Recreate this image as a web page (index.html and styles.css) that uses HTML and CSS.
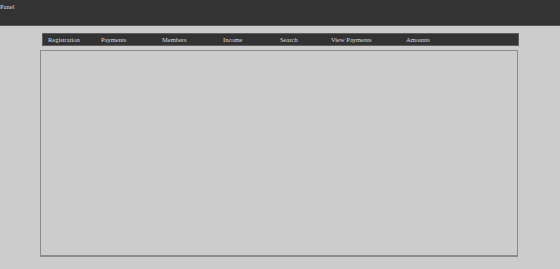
FILE: index.html
```html
<!DOCTYPE html>
<html>
<head>
<meta charset="utf-8">
<link rel="stylesheet" href="styles.css">
</head>
<body>
<header class="top">Panel</header>
<main class="wrap">
  <nav class="menu">
    <a class="item w1">Registration</a>
    <a class="item w2">Payments</a>
    <a class="item w2">Members</a>
    <a class="item w3">Income</a>
    <a class="item w4">Search</a>
    <a class="item w5">View Payments</a>
    <a class="item">Amounts</a>
  </nav>
  <section class="content"></section>
</main>
</body>
</html>
```
FILE: styles.css
```css
html, body {
  margin: 0;
  padding: 0;
  background: #cccccc;
  font-family: "Liberation Serif", "Times New Roman", serif;
}
.top {
  box-sizing: border-box;
  height: 26px;
  background: #333333;
  border-bottom: 1px solid #5a5a5a;
  color: #dddddd;
  font-size: 6.5px;
  line-height: 7px;
  padding: 3px 0 0 0;
}
.wrap {
  display: flex;
  flex-direction: column;
  padding: 7px 0 0 40px;
  width: 478px;
}
.menu {
  box-sizing: border-box;
  margin-left: 2px;
  width: 477px;
  height: 13px;
  background: #333333;
  border: 1px solid #5e5e5e;
  display: flex;
  align-items: center;
  padding-left: 5px;
}
.item {
  color: #dddddd;
  font-size: 6.5px;
  line-height: 7px;
  text-decoration: none;
  white-space: nowrap;
}
.w1 { width: 53px; }
.w2 { width: 61px; }
.w3 { width: 57px; }
.w4 { width: 51px; }
.w5 { width: 75px; }
.content {
  box-sizing: border-box;
  margin-top: 4px;
  width: 478px;
  height: 207px;
  border: 1px solid #8a8a8a;
  border-bottom-width: 2px;
  background: #cccccc;
}
```
